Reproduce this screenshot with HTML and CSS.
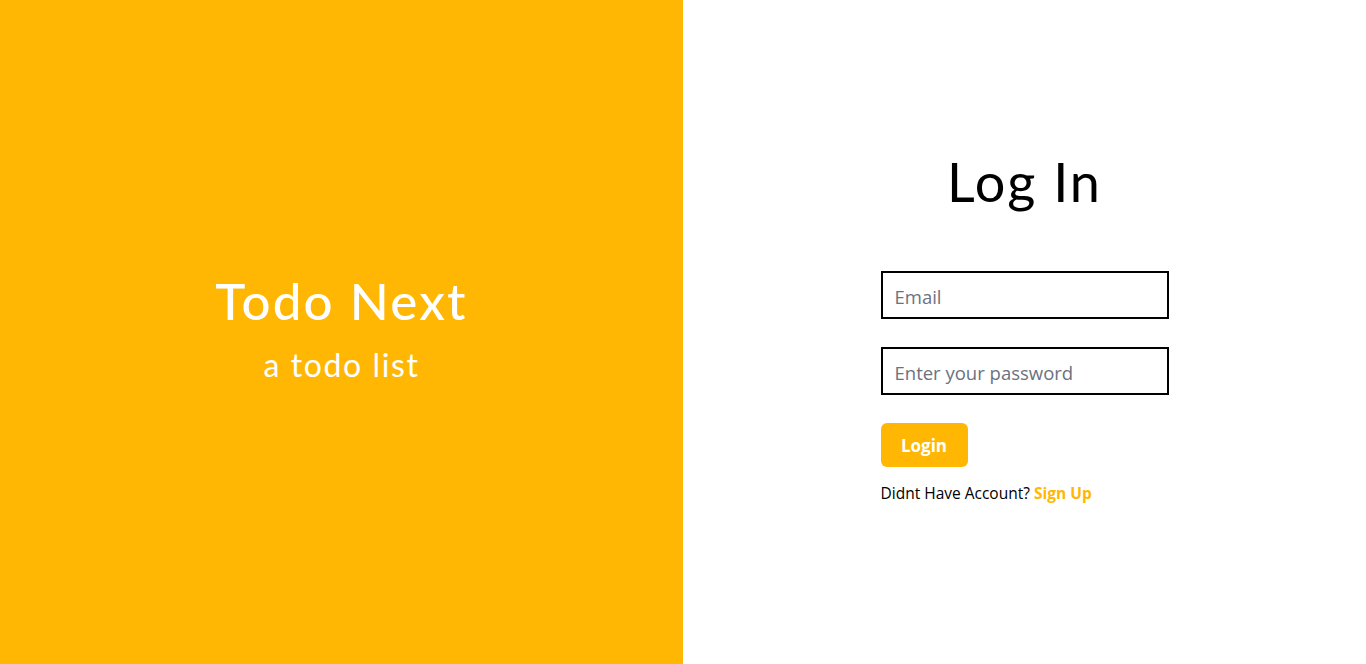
FILE: index.html
```html
<!DOCTYPE html>
<html>
<head>
<meta charset="utf-8">
<link rel="stylesheet" href="styles.css">
</head>
<body>
<div class="page">
  <div class="brand">
    <h1 class="brand-title">Todo Next</h1>
    <p class="brand-sub">a todo list</p>
  </div>
  <div class="auth">
    <div class="auth-inner">
      <h2 class="auth-title">Log In</h2>
      <form class="form">
        <input class="field" type="email" placeholder="Email">
        <input class="field" type="password" placeholder="Enter your password">
        <button class="btn" type="button">Login</button>
        <p class="note">Didnt Have Account? <a class="link" href="#">Sign Up</a></p>
      </form>
    </div>
  </div>
</div>
</body>
</html>
```
FILE: styles.css
```css
* { box-sizing: border-box; }
html, body { margin: 0; padding: 0; }
body { font-family: "Open Sans", "Noto Sans", sans-serif; background: #fff; }
.page { display: flex; height: 664px; }
.brand {
  width: 683px; background: #ffb703; color: #fff;
  display: flex; flex-direction: column; align-items: center; justify-content: center;
  padding-bottom: 9px;
}
.brand-title { margin: 0; font-family: "Lato", sans-serif; font-weight: 500; font-size: 51px; line-height: 60px; letter-spacing: 2.2px; }
.brand-sub { margin: 14px 0 0; font-family: "Lato", sans-serif; font-size: 32px; line-height: 40px; letter-spacing: 1.6px; }
.auth { flex: 1; display: flex; justify-content: center; }
.auth-inner { width: 288px; padding-top: 148px; display: flex; flex-direction: column; align-items: center; }
.auth-title { margin: 0; font-family: "Lato", sans-serif; font-weight: 400; font-size: 54px; line-height: 68px; color: #000; white-space: nowrap; letter-spacing: 2px; }
.form { width: 288px; margin-top: 55px; display: flex; flex-direction: column; align-items: flex-start; }
.field {
  width: 288px; height: 48px; border: 2px solid #000; padding: 2px 12px 0;
  font-family: "Open Sans", sans-serif; font-size: 18.5px; color: #374151; outline: none;
  margin-bottom: 28px;
}
.field::placeholder { color: #6b7280; }
.btn {
  width: 87px; height: 44px; background: #ffb703; color: #fff; border: none; border-radius: 6px;
  font-family: "Open Sans", sans-serif; font-weight: 700; font-size: 17px; padding: 0;
}
.note { margin: 15px 0 0; font-size: 15.5px; color: #000; }
.link { color: #ffb703; font-weight: 700; text-decoration: none; }
```
